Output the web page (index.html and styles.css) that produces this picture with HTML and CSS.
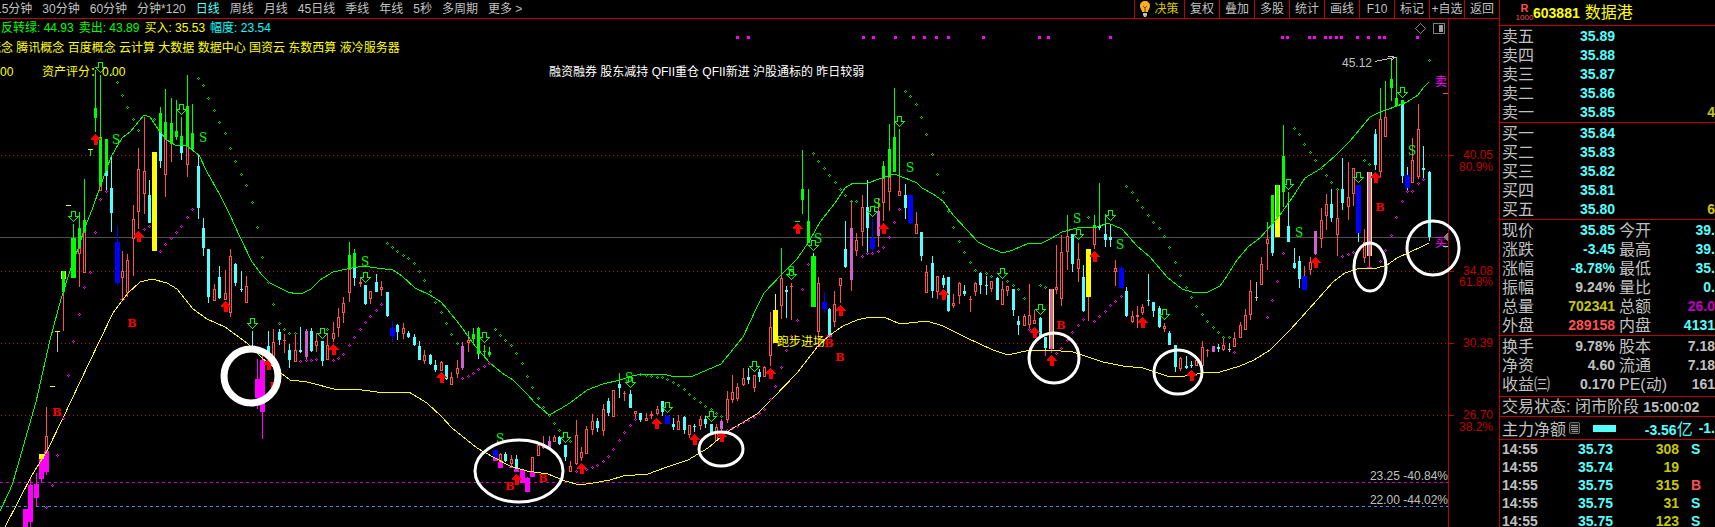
FILE: index.html
```html
<!DOCTYPE html>
<html lang="zh-CN">
<head>
    <meta charset="UTF-8">
    <meta name="viewport" content="width=device-width, initial-scale=1.0">
    <title>603881 数据港</title>
    <link rel="stylesheet" href="styles.css">
</head>
<body>

<main class="left">
    <header class="toolbar">
        <nav class="periods">
            <button>15分钟</button>
            <button>30分钟</button>
            <button>60分钟</button>
            <button>分钟*120</button>
            <button class="active">日线</button>
            <button>周线</button>
            <button>月线</button>
            <button>45日线</button>
            <button>季线</button>
            <button>年线</button>
            <button>5秒</button>
            <button>多周期</button>
            <button>更多 &gt;</button>
        </nav>
        <div class="tools">
            <button class="decision">
                <svg width="10" height="16" viewBox="0 0 10 16">
                    <path d="M5 0C2 0 0 2 0 5c0 2 1 3 2 5v1h6v-1c1-2 2-3 2-5 0-3-2-5-5-5z" fill="#ffb020"/>
                    <path d="M3 5l2 2 2-2M5 7v4" fill="none" stroke="#7a3c00"/>
                    <path d="M3 12h4v2l-1 2H4l-1-2z" fill="#c0c0c0"/>
                </svg>
                决策
            </button>
            <button>复权</button>
            <button>叠加</button>
            <button>多股</button>
            <button>统计</button>
            <button>画线</button>
            <button>F10</button>
            <button>标记</button>
            <button>+自选</button>
            <button>返回</button>
        </div>
    </header>

    <section class="chart">
        <svg id="kline" class="kline" viewBox="0 19 1499 508" preserveAspectRatio="xMinYMin meet"></svg>
        <div class="info">
            <p class="values">
                <span class="green">反转绿: 44.93</span>
                <span class="green">卖出: 43.89</span>
                <span class="yellow">买入: 35.53</span>
                <span class="cyan">幅度: 23.54</span>
            </p>
            <p class="concepts">概念 腾讯概念 百度概念 云计算 大数据 数据中心 国资云 东数西算 液冷服务器</p>
            <p class="score">
                <span class="score-prev">00</span>
                <span class="score-now">资产评分：0.00</span>
                <span class="tags">融资融券 股东减持 QFII重仓 QFII新进 沪股通标的 昨日较弱</span>
            </p>
        </div>
    </section>
</main>

<aside class="quote">
    <h1 class="stock">
        <span class="badge"><b>R</b><small>1000</small></span>
        <span class="code">603881</span>
        <span class="name">数据港</span>
    </h1>

    <dl class="rows book">
        <dt>卖五</dt><dd class="cyan">35.89</dd><dd></dd>
        <dt>卖四</dt><dd class="cyan">35.88</dd><dd></dd>
        <dt>卖三</dt><dd class="cyan">35.87</dd><dd></dd>
        <dt>卖二</dt><dd class="cyan">35.86</dd><dd></dd>
        <dt>卖一</dt><dd class="cyan">35.85</dd><dd class="gold">4</dd>
    </dl>
    <dl class="rows book">
        <dt>买一</dt><dd class="cyan">35.84</dd><dd></dd>
        <dt>买二</dt><dd class="cyan">35.83</dd><dd></dd>
        <dt>买三</dt><dd class="cyan">35.82</dd><dd></dd>
        <dt>买四</dt><dd class="cyan">35.81</dd><dd></dd>
        <dt>买五</dt><dd class="cyan">35.80</dd><dd class="gold">6</dd>
    </dl>
    <dl class="rows detail">
        <dt>现价</dt><dd class="cyan">35.85</dd><dt>今开</dt><dd class="cyan">39.</dd>
        <dt>涨跌</dt><dd class="cyan">-3.45</dd><dt>最高</dt><dd class="cyan">39.</dd>
        <dt>涨幅</dt><dd class="cyan">-8.78%</dd><dt>最低</dt><dd class="cyan">35.</dd>
        <dt>振幅</dt><dd>9.24%</dd><dt>量比</dt><dd class="cyan">0.</dd>
        <dt>总量</dt><dd class="gold">702341</dd><dt>总额</dt><dd class="purple">26.0</dd>
        <dt>外盘</dt><dd class="red">289158</dd><dt>内盘</dt><dd class="cyan">4131</dd>
    </dl>
    <dl class="rows detail capital">
        <dt>换手</dt><dd>9.78%</dd><dt>股本</dt><dd>7.18</dd>
        <dt>净资</dt><dd>4.60</dd><dt>流通</dt><dd>7.18</dd>
        <dt>收益㈢</dt><dd>0.170</dd><dt>PE(动)</dt><dd>161</dd>
    </dl>
    <p class="status">交易状态: 闭市阶段 <b>15:00:02</b></p>
    <div class="flow">
        <span>主力净额</span>
        <svg width="12" height="12" viewBox="0 0 12 12" shape-rendering="crispEdges">
            <rect x="0.5" y="0.5" width="11" height="11" rx="1" fill="#202020" stroke="#707070"/>
            <path d="M2 3.5h8M2 5.5h8M2 7.5h8M3 9.5h7" stroke="#a0a0a0"/>
        </svg>
        <i class="bar"></i>
        <span class="net"><b>-3.56</b>亿</span>
        <b class="cyan">-1.</b>
    </div>
    <table class="ticks">
        <tr><td>14:55</td><td class="cyan">35.73</td><td class="gold">308</td><td class="cyan">S</td></tr>
        <tr><td>14:55</td><td class="cyan">35.74</td><td class="gold">19</td><td></td></tr>
        <tr><td>14:55</td><td class="cyan">35.75</td><td class="gold">315</td><td class="red">B</td></tr>
        <tr><td>14:55</td><td class="cyan">35.75</td><td class="gold">31</td><td class="cyan">S</td></tr>
        <tr><td>14:55</td><td class="cyan">35.75</td><td class="gold">123</td><td class="cyan">S</td></tr>
    </table>
</aside>

<script src="chart.js"></script>
</body>
</html>
```
FILE: styles.css
```css
* {
    box-sizing: border-box;
}
body {
    display: flex;
    height: 100vh;
    margin: 0;
    overflow: hidden;
    background-color: #000;
    color: #c0c0c0;
    font-family: "Liberation Sans", "Noto Sans CJK SC", sans-serif;
    font-size: 12px;
}
p, h1, dl, dd {
    margin: 0;
}
button {
    padding: 0;
    border: 0;
    background: none;
    color: inherit;
    font: inherit;
    line-height: 17px;
    white-space: nowrap;
    cursor: pointer;
}
.green { color: #00ff00; }
.yellow { color: #ffff00; }
.cyan { color: #54ffff; }
.gold { color: #c8c800; }
.red { color: #ff5050; }
.purple { color: #c000c0; }

/* left side */
.left {
    display: flex;
    flex: 1;
    flex-direction: column;
    min-width: 0;
}
.toolbar {
    display: flex;
    justify-content: space-between;
    height: 19px;
    border-bottom: 1px solid #c00000;
}
.periods {
    display: flex;
    gap: 10px;
    margin-left: -5px;
}
.periods .active {
    color: #54ffff;
}
.tools {
    display: flex;
}
.tools button {
    width: 35px;
    border-left: 1px solid #c00000;
    text-align: center;
}
.tools .decision {
    display: flex;
    align-items: center;
    justify-content: center;
    gap: 4px;
    width: 50px;
    color: #d8c800;
}
.chart {
    position: relative;
    flex: 1;
    min-height: 0;
}
.kline {
    display: block;
    width: 100%;
}
.info {
    position: absolute;
    top: 0;
    left: 0;
    white-space: nowrap;
}
.values {
    display: flex;
    gap: 5px;
    padding-left: 1px;
    line-height: 18px;
}
.values .cyan {
    color: #00ffff;
}
.concepts {
    margin-left: -11px;
    color: #ffff00;
    line-height: 22px;
}
.score {
    display: flex;
    padding-top: 3px;
    color: #ffff00;
    line-height: 20px;
}
.score-prev {
    width: 42px;
}
.score-now {
    width: 507px;
}
.tags {
    color: #fff;
}

/* chart parts */
.kline text {
    font-size: 12px;
    dominant-baseline: central;
}
.kline .mark {
    font-family: "DejaVu Serif", serif;
    font-size: 11px;
    font-weight: bold;
    text-anchor: middle;
}
.kline .sell {
    font-size: 12px;
    font-weight: normal;
}
.kline .end {
    text-anchor: end;
}

/* right side */
.quote {
    width: 216px;
    overflow: hidden;
    border-left: 1px solid #c00000;
    font-size: 14px;
}
.stock {
    display: flex;
    align-items: center;
    height: 25px;
    padding-left: 16px;
    color: #ffff00;
    font-size: 14px;
    line-height: 22px;
}
.badge {
    display: flex;
    flex-direction: column;
    align-items: center;
    width: 17px;
    color: #ff5050;
    font-size: 11px;
    line-height: 10px;
}
.badge small {
    font-size: 8px;
    font-weight: normal;
}
.name {
    margin-left: 5px;
    font-size: 16px;
    font-weight: normal;
}
.rows {
    display: grid;
    grid-auto-rows: 19px;
    padding: 1px 0 0 2px;
    border-top: 1px solid #c00000;
    line-height: 19px;
}
.book {
    grid-template-columns: 48px 65px 1fr;
}
.detail {
    grid-template-columns: 48px 65px 54px 1fr;
}
.capital {
    padding-bottom: 2px;
}
.rows dt {
    font-size: 16px;
    white-space: nowrap;
}
.rows dd {
    font-weight: bold;
    text-align: right;
}
.detail dt:nth-of-type(even) {
    padding-left: 4px;
}
.status {
    height: 20px;
    padding-left: 2px;
    border-top: 1px solid #c00000;
    font-size: 16px;
    line-height: 19px;
    white-space: nowrap;
}
.status b {
    font-size: 14px;
}
.flow {
    display: flex;
    align-items: center;
    height: 23px;
    padding-left: 2px;
    border-top: 1px solid #c00000;
    font-size: 16px;
    white-space: nowrap;
}
.flow svg {
    margin: 0 13px 0 3px;
}
.flow b {
    font-size: 14px;
}
.bar {
    width: 24px;
    height: 7px;
    background-color: #54ffff;
}
.net {
    margin: 0 6px 0 29px;
    color: #54ffff;
}
.ticks {
    width: 100%;
    border-top: 1px solid #c00000;
    border-collapse: collapse;
    table-layout: fixed;
    font-weight: bold;
}
.ticks td {
    width: 48px;
    height: 18px;
    padding: 0 0 0 2px;
    line-height: 18px;
}
.ticks td:nth-child(2) {
    width: 65px;
    text-align: right;
}
.ticks td:nth-child(3) {
    width: 66px;
    text-align: right;
}
.ticks td:nth-child(4) {
    width: 36px;
    padding-left: 12px;
}
```
FILE: chart.js
```js
const colors = {
    r: '#ff5050', c: '#54ffff', g: '#00ff00', y: '#ffff00',
    b: '#0000ff', m: '#ff00ff', p: '#d060d0', w: '#c0c0c0'
};

// x, kind, high, body top, body bottom, low (capital letter: wide body)
const candles = `
25 M 509 509 527 527;30 M 478 485 522 527;36 M 473 484 498 506;41 Y 454 454 459 459;41 M 459 459 479 483
46 r 407 436 451 451;46 M 451 451 472 475;52 Y 386 386 387 387;57 w 331 331 331 352;57 Y 331 331 332 332
63 Y 271 271 279 279;63 g 271 271 292 292;63 r 292 292 292 331;68 Y 205 205 206 206;73 G 224 238 278 278
79 g 212 228 248 248;79 r 248 248 254 287;84 g 179 220 232 232;84 r 232 232 273 273;90 Y 149 149 150 150
90 g 150 150 150 156;95 g 70 108 118 132;100 g 75 137 185 185;100 r 185 185 191 191;106 g 139 139 171 171
106 c 171 171 176 191;111 c 157 188 213 232;117 B 226 242 283 285;122 r 251 271 278 299;122 M 299 299 300 300
127 r 254 260 293 297;133 r 205 219 239 276;138 r 148 169 212 229;144 r 117 171 194 214;149 c 180 195 223 223
154 Y 152 152 251 251;160 g 107 113 132 132;160 c 132 132 161 168;165 g 89 122 139 139;165 r 139 139 175 197
171 g 98 123 144 144;171 r 144 144 144 162;176 g 100 131 137 140;181 g 117 136 146 146;181 c 146 146 153 160
187 g 75 106 146 146;187 r 146 146 165 177;192 g 104 133 149 149;192 c 149 149 149 151;198 c 155 166 208 219
203 c 218 228 248 256;208 c 249 249 297 303;214 r 284 289 301 301;219 c 266 277 298 299;225 r 270 293 300 300
230 r 249 256 313 317;235 c 263 264 283 286;241 c 271 289 290 292;246 r 276 286 303 303;252 c 331 346 346 346
257 M 359 379 398 409;262 r 355 355 355 360;262 M 360 360 412 439;268 c 331 346 352 352;273 r 329 342 360 360
279 c 329 332 340 345;284 r 334 340 341 353;289 c 344 350 360 368;295 r 334 350 362 362;300 c 327 350 352 353
306 p 329 331 357 360;311 c 328 331 351 352;316 r 333 341 346 352;322 c 341 341 361 366;327 r 334 345 360 360
333 r 322 333 339 342;338 r 308 317 328 337;343 r 297 303 313 323;349 g 242 255 269 269;349 r 269 269 293 302
354 g 249 253 268 268;354 c 268 268 278 286;360 r 278 282 284 287;365 c 285 285 304 305;370 r 291 291 299 304
376 c 274 282 292 292;381 r 281 287 290 296;387 c 292 292 316 317;392 B 321 328 336 342;397 c 324 325 332 340
403 r 323 328 334 339;408 c 331 333 337 338;414 c 334 337 345 346;419 c 341 346 360 360;424 r 350 355 361 364
430 c 354 355 364 365;435 c 360 365 370 372;441 r 361 362 371 371;446 c 365 365 379 380;451 r 372 377 385 385
457 r 360 368 374 378;462 p 342 346 368 370;468 g 331 331 331 340;468 r 338 340 343 352;473 g 328 334 339 344
478 g 327 328 354 354;478 c 354 354 354 359;484 g 345 351 352 357;489 g 347 352 355 357;495 B 450 450 458 458
495 M 458 458 461 461;500 r 453 454 462 462;500 M 462 462 468 468;505 c 452 454 461 462;511 r 455 459 464 468
511 M 467 467 468 468;516 c 455 459 469 469;516 M 469 469 472 472;522 M 470 470 483 483;527 M 477 478 492 492
532 r 457 457 472 472;532 M 472 472 477 477;538 r 444 445 456 456;543 r 436 446 448 449;549 p 436 441 448 448
554 r 435 437 442 442;559 c 436 437 444 445;565 c 445 445 457 461;570 r 461 466 472 472;576 r 420 435 464 465
581 r 447 452 458 461;586 r 426 429 454 454;592 r 414 421 430 435;597 c 418 421 428 432;603 r 404 409 431 436
608 c 398 401 413 416;613 r 390 390 417 417;619 g 373 373 373 382;619 c 382 384 388 398;624 r 391 393 394 401
630 c 390 394 408 408;635 r 411 411 414 419;640 c 413 413 420 422;646 r 413 418 421 421;651 r 411 414 416 419
657 r 406 409 414 415;662 c 401 401 412 416;667 B 415 416 424 424;673 c 418 424 427 430;678 r 415 421 430 430
684 c 416 417 430 434;689 r 425 425 435 438;694 c 424 426 427 432;700 r 416 419 426 430;705 c 416 419 424 428
711 c 424 424 433 433;716 r 424 427 441 441;721 p 419 421 429 432;727 r 391 399 420 423;732 r 375 392 400 403
737 r 383 387 399 401;743 r 368 378 385 386;748 c 368 377 380 384;754 r 375 375 388 392;759 c 369 372 377 382
764 r 366 367 377 377;770 r 312 327 356 366;775 Y 294 310 343 343;781 g 248 248 248 274;781 r 274 278 306 319
786 c 286 290 292 318;791 r 283 286 287 320;797 G 221 221 222 222;802 g 150 189 200 214;808 g 189 221 243 243
813 c 253 253 253 256;813 G 256 256 307 307;818 r 277 283 332 346;818 M 346 346 347 347;824 B 292 302 309 313
829 c 308 309 335 335;829 M 335 335 337 338;834 r 291 304 322 327;840 r 278 278 286 303;845 c 221 249 267 268
851 r 201 201 201 291;851 p 228 228 280 280;856 r 233 240 251 256;862 r 195 207 232 246;867 c 180 207 228 253
872 B 219 238 249 251;878 r 198 198 198 247;878 p 211 211 236 236;883 g 161 166 178 178;883 r 178 178 203 221
889 g 124 149 177 177;889 r 177 177 192 211;894 g 88 137 172 172;899 g 129 129 129 175;899 r 175 191 196 196
905 c 184 195 208 219;910 B 195 195 223 224;916 r 212 224 234 234;921 c 232 232 256 261;926 r 265 272 293 293
932 c 256 263 291 298;937 r 276 276 292 299;943 c 275 278 285 288;948 c 277 277 311 312;953 r 294 303 306 308
959 r 282 283 296 304;964 c 285 291 294 296;970 r 296 299 300 312;975 r 282 283 292 296;980 c 272 273 285 294
986 c 276 285 286 295;991 r 281 281 289 292;997 c 277 278 300 300;1002 r 281 289 305 305;1007 r 286 286 291 296
1013 c 289 289 310 316;1018 c 316 321 325 335;1024 r 314 316 326 326;1029 r 284 315 325 329;1034 r 310 320 324 324
1040 c 317 318 337 337;1045 c 337 337 348 350;1045 M 350 350 351 356;1051 Y 289 289 349 349;1051 p 289 289 349 349
1051 M 347 350 351 353;1056 r 245 287 290 294;1061 r 235 252 299 306;1067 g 215 215 215 230;1067 r 230 236 252 270
1072 c 234 234 264 272;1078 r 243 259 269 282;1083 c 265 277 311 312;1088 r 297 297 297 321;1088 Y 249 249 297 297
1094 g 215 225 227 227;1094 r 227 227 245 249;1099 g 183 183 183 225;1099 c 225 226 228 230;1105 g 214 214 214 224
1105 c 224 234 240 247;1110 c 224 237 240 247;1115 r 260 268 272 286;1121 B 266 268 288 288;1126 c 287 291 316 317
1132 r 311 316 322 323;1137 r 306 315 317 328;1142 r 304 307 313 315;1148 c 274 300 301 306;1153 c 302 302 311 317
1159 c 306 308 327 328;1164 r 323 326 329 332;1169 c 331 333 345 345;1175 c 345 345 367 372;1180 r 357 358 369 371
1186 c 356 366 368 369;1191 c 361 365 366 368;1196 r 360 360 366 366;1202 r 341 347 366 366;1207 r 349 350 351 357
1213 p 346 346 352 352;1218 c 344 347 349 352;1223 r 338 345 350 351;1229 w 343 349 350 352;1234 r 332 338 347 347
1240 r 322 325 338 338;1245 r 309 315 330 330;1250 r 280 291 315 320;1256 w 282 297 298 301;1261 r 257 264 285 285
1267 g 222 222 222 229;1267 r 229 239 244 270;1272 g 195 195 224 224;1272 c 224 224 253 256;1277 Y 185 185 237 237
1277 g 185 185 217 217;1283 g 125 156 192 207;1288 g 192 192 192 202;1288 c 202 226 242 242;1294 c 248 263 268 269
1299 c 256 261 279 288;1304 r 266 266 266 276;1304 B 276 276 290 290;1310 r 257 262 270 275;1315 p 231 231 254 255
1321 r 208 220 239 248;1326 r 194 204 216 230;1331 c 189 204 218 222;1337 r 190 218 235 256;1342 c 158 189 203 210
1348 r 162 197 207 220;1353 r 168 168 194 206;1358 c 233 233 233 242;1358 B 185 185 233 233;1364 r 229 242 258 263
1369 r 256 256 256 268;1369 Y 172 172 256 256;1369 p 172 172 256 256;1369 M 267 267 268 268;1375 c 129 134 165 170
1380 g 88 88 88 119;1380 r 119 119 172 178;1385 g 81 81 81 111;1385 r 111 117 137 137;1391 g 59 79 88 101
1396 g 57 98 106 107;1402 g 100 100 104 104;1402 c 104 104 176 183;1407 c 167 167 167 191;1407 B 175 175 188 188
1412 r 138 160 183 183;1418 r 104 129 177 179;1423 c 146 168 170 179;1429 c 171 172 237 241`;

const upper = `0,511 10,490 13,482 36,402 50,340 61,299 70,271 79,246 85,227 92,210 100,187 111,157 122,138 130,132
144,115 150,117 160,132 167,140 175,145 187,146 199,155 207,172 220,195 230,215 240,237 252,262 262,275 270,283
280,288 288,292 297,294 303,293 311,289 320,280 333,272 347,269 363,266 377,268 393,270 402,276 415,288 430,295
441,302 447,309 460,325 475,346 490,363 502,373 513,380 527,394 535,403 549,415 560,409 570,403 587,390 603,384
620,380 632,376 643,374 663,374 675,377 693,376 707,370 721,364 730,353 743,337 757,307 764,293 782,274 797,259
810,240 820,222 835,203 845,188 853,183 868,183 882,178 894,174 905,178 917,183 922,188 933,194 943,201 953,215
967,230 978,242 990,248 1003,253 1013,250 1029,243 1042,243 1052,238 1062,232 1077,228 1097,227 1108,223 1122,229
1137,246 1150,257 1167,277 1182,289 1192,292 1208,292 1220,286 1227,276 1237,260 1248,247 1260,238 1280,215 1292,198
1305,178 1320,169 1335,156 1350,141 1370,117 1378,113 1397,106 1407,102 1418,95 1423,88 1429,82`;

const lower = `5,527 32,475 47,451 63,418 80,382 100,340 113,313 122,301 128,293 140,282 152,279 167,283 177,289
185,299 193,309 207,319 225,327 247,343 262,358 277,370 290,380 307,382 338,390 355,389 377,392 409,392 427,403
441,416 452,428 467,440 477,448 493,457 510,466 527,471 548,474 565,481 580,485 593,483 610,480 623,476 648,474
667,467 688,460 708,448 727,432 757,414 773,398 797,373 818,346 830,335 843,326 857,320 870,317 884,317 900,324
927,321 943,326 967,338 993,350 1008,355 1030,350 1048,350 1073,352 1103,362 1123,366 1143,368 1170,377 1185,376
1203,373 1220,372 1240,366 1254,360 1270,350 1290,330 1300,319 1317,300 1333,282 1345,273 1357,269 1377,268
1387,265 1397,258 1410,252 1423,246 1429,243`;

const greenDots = `111,74 117,82 122,95 127,107 133,119 138,130 154,119 198,78 203,85 208,98 214,110 219,122 225,133
230,148 235,161 241,174 246,185 252,202 257,227 262,257 268,282 273,304 279,323 284,329 289,333 295,333 327,329
387,243 392,247 397,251 403,255 408,258 414,263 419,271 424,280 430,291 435,302 441,312 446,323 451,334 457,343
495,329 500,335 505,340 511,345 516,353 522,363 527,376 532,387 538,398 543,407 549,415 554,423 559,430 570,441
640,374 646,375 651,376 657,377 662,377 667,379 673,382 678,385 684,389 689,394 694,398 700,402 705,406 711,409
716,413 721,416 813,153 818,161 824,168 829,175 835,182 840,189 845,195 851,201 856,201 905,91 910,96 916,104
921,117 926,134 932,154 937,174 943,192 948,211 953,227 959,241 964,252 970,262 975,270 986,273 991,276 1007,281
1013,285 1018,289 1024,298 1040,285 1045,287 1088,217 1126,186 1132,192 1137,200 1142,207 1148,215 1153,222
1159,228 1164,236 1169,247 1175,262 1180,275 1186,287 1191,297 1196,306 1202,314 1207,321 1213,327 1218,332
1223,337 1229,337 1294,128 1299,134 1304,144 1310,152 1315,160 1321,168 1326,175 1331,182 1337,189 1364,160
1369,164 1429,60`;

const pinkDots = `46,507 52,485 57,455 63,418 68,375 73,341 79,314 84,287 90,272 95,232 100,199 106,191 144,229
149,226 160,251 165,244 171,238 176,232 181,226 187,217 192,209 300,361 306,360 311,360 316,359 333,360 338,358
343,354 349,345 354,337 360,329 365,322 370,316 376,310 381,304 462,378 468,376 473,373 478,369 484,366 489,363
576,471 586,469 592,467 597,465 603,461 608,456 613,449 619,440 624,432 630,425 635,419 727,430 732,428 737,426
743,422 748,420 754,417 759,413 764,409 770,399 775,386 781,367 786,350 791,336 797,320 802,289 808,264 862,256
867,253 872,253 878,251 883,247 889,237 894,222 899,209 1029,329 1056,353 1061,348 1067,340 1072,332 1078,325
1083,319 1094,321 1099,316 1105,311 1110,305 1115,301 1121,296 1234,352 1267,317 1272,300 1277,281 1283,253
1342,256 1348,254 1353,252 1358,250 1380,261 1385,250 1391,235 1396,217 1402,201 1407,191 1412,191 1418,183
1423,179`;

const downArrows = `73,211 100,62 181,104 252,318 322,328 365,272 484,332 565,432 630,377 667,402 711,411 754,361
791,269 813,240 872,206 899,116 1002,268 1040,304 1078,229 1110,210 1164,309 1288,179 1358,172 1402,87`;
const upArrows = `95,134 138,231 225,301 268,359 333,344 441,372 516,474 581,463 656,418 694,434 721,431 770,368
797,223 840,305 883,223 943,289 1034,327 1051,355 1094,251 1142,317 1191,370 1315,257 1375,172`;
const buys = '57,412 132,323 274,386 510,486 543,478 829,343 840,357 1061,325 1380,207';
const sells = '116,140 203,138 365,262 500,439 629,378 791,272 818,239 877,204 910,168 1077,219 1120,245 1299,233 1412,151';
const squares = [736, 747, 862, 872, 894, 912, 923, 935, 947, 982, 1038, 1047, 1109, 1281, 1286, 1308, 1313, 1324,
    1329, 1335, 1340, 1356, 1367, 1378, 1383, 1416];

// cx, cy, rx, ry, stroke
const circles = [[251, 376, 27, 27, 7], [519, 471, 44, 31, 3], [721, 449, 22, 17, 3], [1054, 358, 25, 25, 3],
    [1178, 372, 24, 22, 3], [1370, 267, 16, 24, 3], [1433, 248, 26, 27, 3]];

const points = list => list.trim().split(/\s+/).map(p => p.split(',').map(Number));
const rect = (x, y, w, h, fill) => `<rect x="${x}" y="${y}" width="${w}" height="${h}" fill="${fill}"/>`;
const line = (x1, y1, x2, y2, color, extra = '') =>
    `<path d="M${x1} ${y1}L${x2} ${y2}" stroke="${color}" fill="none" ${extra}/>`;
const text = (x, y, value, fill, cls = '') => `<text x="${x}" y="${y}" fill="${fill}" class="${cls}">${value}</text>`;

function drawGrid() {
    let out = '';
    for (const y of [155, 271, 343, 415]) {
        out += line(1, y + 0.5, 1448, y + 0.5, '#b01818', 'stroke-dasharray="1 3"');
        out += line(1448, y + 0.5, 1454, y + 0.5, '#c00000');
    }
    out += line(0, 237.5, 1448, 237.5, '#505050');
    out += line(0, 482.5, 1448, 482.5, '#c800c8', 'stroke-dasharray="3 3"');
    out += line(0, 506.5, 1448, 506.5, '#4090e8', 'stroke-dasharray="3 3"');
    out += line(1448.5, 19, 1448.5, 527, '#c00000');
    return out;
}

function drawCandle(row) {
    const [xs, kind, ...ys] = row.trim().split(' ');
    const x = Number(xs);
    const [high, top, bottom, low] = ys.map(Number);
    const color = colors[kind.toLowerCase()];
    const half = kind === kind.toUpperCase() ? 2 : 1;
    let out = rect(x, high, 1, low - high, color);
    if (bottom > top) {
        out += rect(x - half, top, half * 2 + 1, bottom - top, color);
        if (kind === 'r' && bottom - top > 2) {
            out += rect(x, top + 1, 1, bottom - top - 2, '#000');
        }
    }
    return out;
}

function drawDots(list, color) {
    return points(list).map(([x, y]) =>
        rect(x, y - 1, 1, 1, color) + rect(x - 1, y, 1, 1, color) +
        rect(x + 1, y, 1, 1, color) + rect(x, y + 1, 1, 1, color)).join('');
}

function drawMarks() {
    let out = '';
    for (const [x, y] of points(downArrows)) {
        out += `<path d="M${x - 1.5} ${y + 0.5}h4v5h3l-5 5l-5 -5h3z" fill="none" stroke="#00ff00"/>`;
    }
    for (const [x, y] of points(upArrows)) {
        out += `<path d="M${x + 0.5} ${y}l5 5v1h-3v5h-4v-5h-3v-1z" fill="#ff0000"/>`;
    }
    for (const [x, y] of points(buys)) {
        out += text(x, y, 'B', '#ff0000', 'mark');
    }
    for (const [x, y] of points(sells)) {
        out += text(x, y, 'S', '#00ff00', 'mark sell');
    }
    for (const x of squares) {
        out += rect(x, 36, 3, 3, '#ff00ff');
    }
    return out;
}

function drawLabels() {
    let out = '';
    const axis = [[155, '40.05'], [167, '80.9%'], [271, '34.08'], [282, '61.8%'], [343, '30.39'], [415, '26.70'], [427, '38.2%']];
    for (const [y, value] of axis) {
        out += text(1493, y, value, '#c00000', 'end');
    }
    out += text(1448, 476, '23.25 -40.84%', '#c0c0c0', 'end');
    out += text(1448, 500, '22.00 -44.02%', '#c0c0c0', 'end');
    out += text(1342, 63, '45.12', '#c0c0c0');
    out += '<path d="M1375 61.5L1394 57.5M1388 56.5h4l3 1l-4 3" fill="none" stroke="#c0c0c0"/>';
    out += text(777, 342, '跑步进场', '#ffff00');
    out += text(1435, 82, '卖', '#ff00ff');
    out += text(1435, 243, '买', '#ff00ff');
    out += line(1443, 93.5, 1448, 93.5, '#ff5050');
    out += line(1443, 246.5, 1448, 246.5, '#54ffff');
    out += '<path d="M1443 237l5 -4v8z" fill="#808080"/>';
    out += '<path d="M1420.5 23.5l5 5l-5 5l-5 -5z" fill="none" stroke="#808080"/>';
    out += '<rect x="1433.5" y="23.5" width="11" height="10" rx="1" fill="none" stroke="#808080"/>';
    out += rect(1439, 25, 4, 7, '#a0a0a0');
    return out;
}

function drawChart() {
    let out = '<g shape-rendering="crispEdges">';
    out += drawGrid();
    out += candles.trim().split(/[;\n]/).map(drawCandle).join('');
    out += `<polyline points="${upper}" fill="none" stroke="#00ff00"/>`;
    out += `<polyline points="${lower}" fill="none" stroke="#ffff00"/>`;
    out += drawDots(greenDots, '#00d800') + drawDots(pinkDots, '#ff00ff');
    out += drawMarks() + drawLabels() + '</g>';
    for (const [cx, cy, rx, ry, w] of circles) {
        out += `<ellipse cx="${cx}" cy="${cy}" rx="${rx}" ry="${ry}" fill="none" stroke="#fff" stroke-width="${w}"/>`;
    }
    document.getElementById('kline').innerHTML = out;
}

drawChart();
```
